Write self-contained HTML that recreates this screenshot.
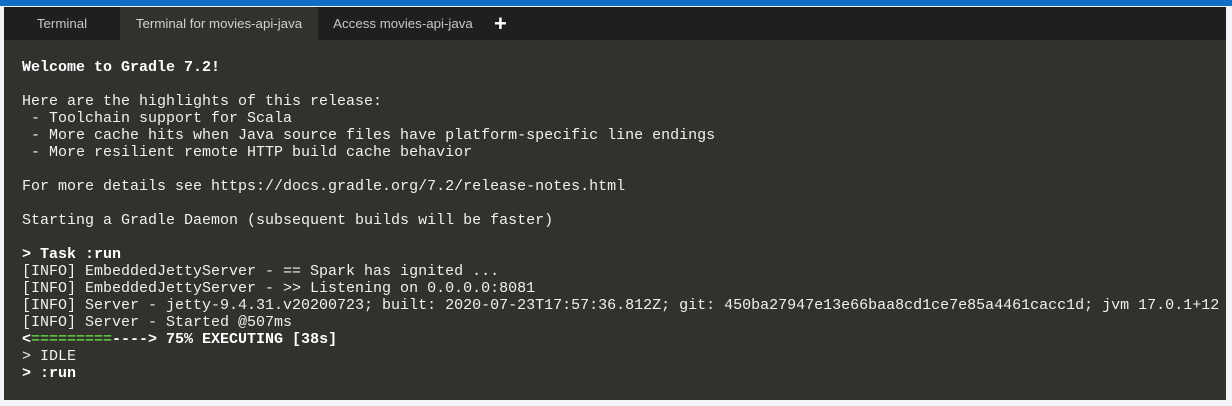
<!DOCTYPE html>
<html><head><style>
html,body{margin:0;padding:0;width:1232px;height:406px;overflow:hidden;background:#f2f4f8;}
.blue{position:absolute;left:0;top:0;width:1232px;height:6px;background:#0f6fc6;}
.wrap{position:absolute;left:4px;top:7px;width:1222px;height:393px;background:#32312d;}
.tabs{height:33px;background:#1f1f1f;position:relative;font-family:"Liberation Sans",sans-serif;font-size:13.3px;color:#c6c6c6;}
.tab{position:absolute;top:0;height:33px;line-height:33px;text-align:center;}
.t1{left:0;width:116px;}
.t2{left:116px;width:198px;background:#32312d;color:#d0d0d0;}
.t3{left:314px;width:170px;}
.plus{position:absolute;left:490px;top:0;line-height:33px;font-size:22px;color:#fff;font-weight:bold;}
pre{margin:0;position:absolute;left:18px;top:52px;font-family:"Liberation Mono","Courier New",Courier,monospace;font-size:15px;line-height:17px;color:#f0f0f0;}
b{font-weight:bold;color:#fff}
.g{color:#5ec03a;font-weight:bold}
</style></head><body>
<div class="blue"></div>
<div class="wrap">
<div class="tabs"><div class="tab t1">Terminal</div><div class="tab t2">Terminal for movies-api-java</div><div class="tab t3">Access movies-api-java</div><div class="plus">+</div></div>
<pre><b>Welcome to Gradle 7.2!</b>

Here are the highlights of this release:
 - Toolchain support for Scala
 - More cache hits when Java source files have platform-specific line endings
 - More resilient remote HTTP build cache behavior

For more details see https://docs.gradle.org/7.2/release-notes.html

Starting a Gradle Daemon (subsequent builds will be faster)

<b>&gt; Task :run</b>
[INFO] EmbeddedJettyServer - == Spark has ignited ...
[INFO] EmbeddedJettyServer - &gt;&gt; Listening on 0.0.0.0:8081
[INFO] Server - jetty-9.4.31.v20200723; built: 2020-07-23T17:57:36.812Z; git: 450ba27947e13e66baa8cd1ce7e85a4461cacc1d; jvm 17.0.1+12
[INFO] Server - Started @507ms
<b>&lt;</b><span class="g">=========</span><b>----&gt; 75% EXECUTING [38s]</b>
&gt; IDLE
<b>&gt; :run</b></pre>
</div>
</body></html>
